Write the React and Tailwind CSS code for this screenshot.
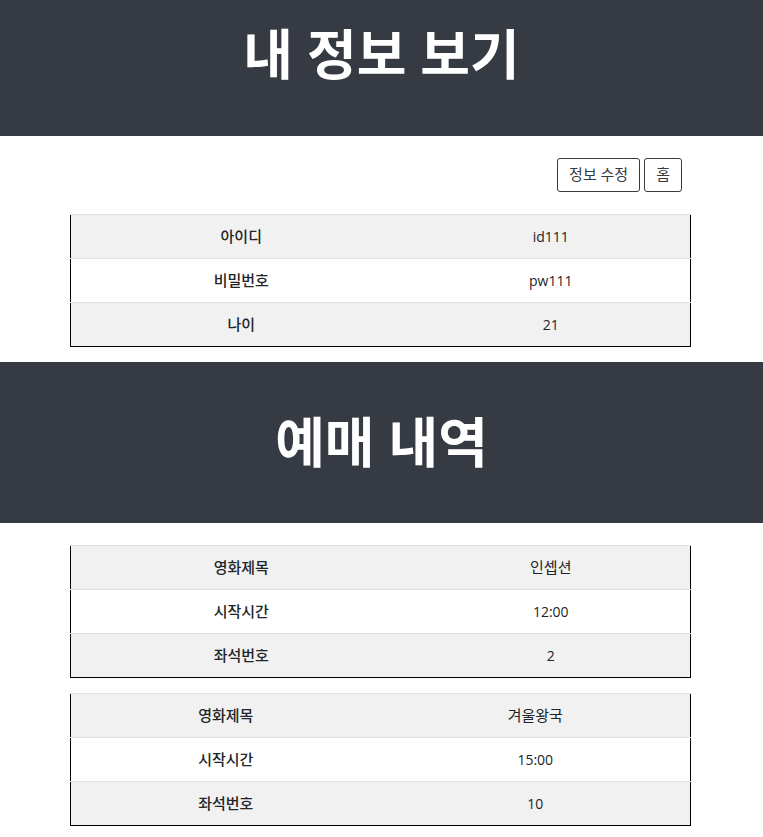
const profile = [
  ["아이디", "id111"],
  ["비밀번호", "pw111"],
  ["나이", "21"],
];

const bookings = [
  {
    labelWidth: "w-[55%]",
    rows: [
      ["영화제목", "인셉션"],
      ["시작시간", "12:00"],
      ["좌석번호", "2"],
    ],
  },
  {
    labelWidth: "w-1/2",
    rows: [
      ["영화제목", "겨울왕국"],
      ["시작시간", "15:00"],
      ["좌석번호", "10"],
    ],
  },
];

const hangul = /[가-힣]/;

function Banner({ children, className }) {
  return (
    <header className={`bg-[#363a42] text-center text-white ${className}`}>
      <h1 className="text-[54px] leading-[68px] font-bold">{children}</h1>
    </header>
  );
}

function InfoTable({ rows, labelWidth }) {
  return (
    <table className="w-full table-fixed border-collapse border border-black text-center">
      <tbody>
        {rows.map(([label, value]) => (
          <tr key={label} className="h-11 odd:bg-[#f1f1f1]">
            <th scope="row" className={`border-t border-[#dee0e4] pb-0.5 text-[15px] leading-5 font-medium ${labelWidth}`}>
              {label}
            </th>
            <td className={`border-t border-[#dee0e4] leading-5 ${hangul.test(value) ? "pb-0.5 text-[15px]" : "text-sm"}`}>
              {value}
            </td>
          </tr>
        ))}
      </tbody>
    </table>
  );
}

function OutlineButton({ children }) {
  return (
    <button
      type="button"
      className="h-[34px] rounded-[3px] border border-[#343a40] bg-white px-[11px] pb-0.5 text-[15px] leading-5 text-[#343a40] hover:bg-[#343a40] hover:text-white"
    >
      {children}
    </button>
  );
}

export default function App() {
  return (
    <main className="bg-white pb-3 font-['Open_Sans','Noto_Sans_CJK_KR',sans-serif] text-[#212529]">
      <Banner className="pt-5 pb-12">내 정보 보기</Banner>
      <section className="pr-[72px] pl-[70px]">
        <div className="flex justify-end gap-1 py-[22px] pr-[9px]">
          <OutlineButton>정보 수정</OutlineButton>
          <OutlineButton>홈</OutlineButton>
        </div>
        <InfoTable rows={profile} labelWidth="w-[55%]" />
      </section>
      <Banner className="mt-[15px] pt-[46px] pb-[47px]">예매 내역</Banner>
      <section className="flex flex-col gap-[15px] pt-[22px] pr-[72px] pl-[70px]">
        {bookings.map((booking, index) => (
          <InfoTable key={index} rows={booking.rows} labelWidth={booking.labelWidth} />
        ))}
      </section>
    </main>
  );
}
